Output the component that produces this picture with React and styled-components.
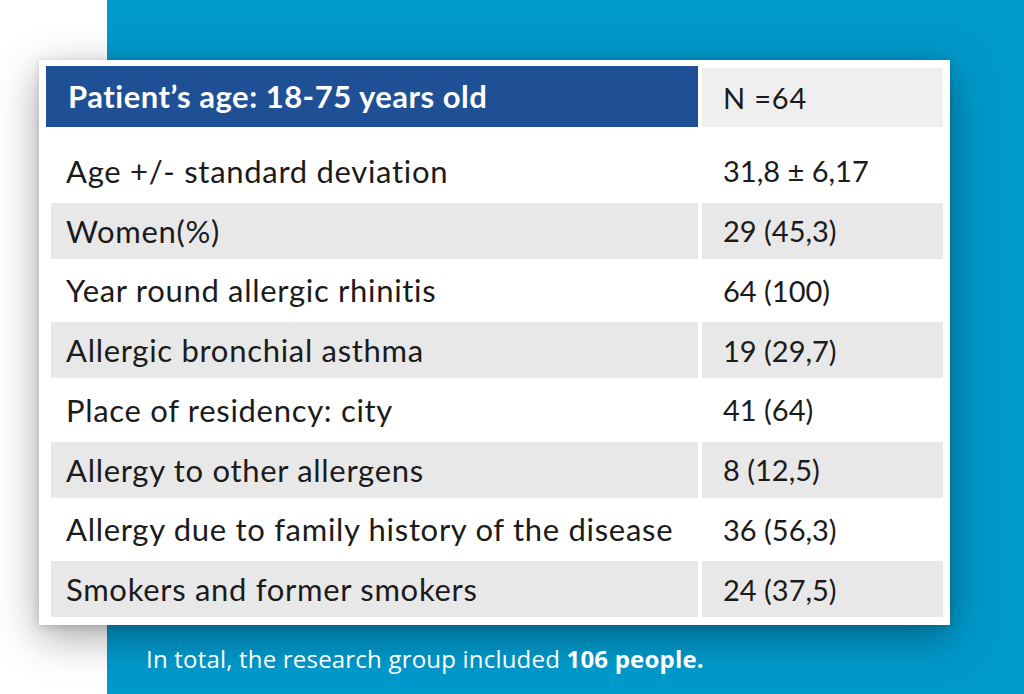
import React from "react";
import styled, { createGlobalStyle } from "styled-components";

const GlobalStyle = createGlobalStyle`
  html, body {
    margin: 0;
    padding: 0;
    background: #ffffff;
  }
  body {
    font-family: "Lato", "Open Sans", sans-serif;
  }
`;

const Page = styled.div`
  width: 1024px;
  height: 694px;
  overflow: hidden;
  background: #ffffff;
  display: flex;
`;

const BluePanel = styled.div`
  margin-left: 107px;
  flex: 1;
  height: 694px;
  background: #0099cc;
  padding-top: 60px;
  box-sizing: border-box;
  display: flex;
  flex-direction: column;
`;

const Card = styled.div`
  margin-left: -68px;
  width: 911px;
  height: 565px;
  box-sizing: border-box;
  background: #ffffff;
  padding: 6px 8px 8px 12px;
  box-shadow: 0 12px 40px rgba(0, 0, 0, 0.35), 0 2px 8px rgba(0, 0, 0, 0.15);
  display: flex;
  flex-direction: column;
  gap: 4px;
`;

const Row = styled.div`
  display: grid;
  column-gap: 4px;
  height: ${(p) => (p.$head ? "61px" : "55.75px")};
  margin-left: ${(p) => (p.$head ? "-5px" : "0")};
  grid-template-columns: ${(p) => (p.$head ? "652px 241px" : "647px 241px")};
  margin-bottom: ${(p) => (p.$head ? "12px" : "0")};
`;

const Cell = styled.div`
  display: flex;
  align-items: center;
  font-size: ${(p) => (p.$value ? "29px" : "31px")};
  color: #1b1b1b;
  letter-spacing: ${(p) => (p.$value ? "0" : "0.7px")};
  background: ${(p) => (p.$shade ? "#e8e8e8" : "transparent")};
  padding-left: ${(p) => (p.$value ? "21px" : "15px")};
  white-space: nowrap;
`;

const HeadCell = styled.div`
  display: flex;
  align-items: center;
  font-size: 31px;
  font-weight: 700;
  letter-spacing: 0.5px;
  color: #ffffff;
  background: #1f4f95;
  padding-left: 22px;
  padding-bottom: 2px;
  white-space: nowrap;
`;

const CountCell = styled.div`
  display: flex;
  align-items: center;
  margin-top: 2px;
  font-size: 29px;
  letter-spacing: 0.8px;
  color: #1b1b1b;
  background: #efefef;
  padding-left: 21px;
`;

const Footer = styled.p`
  margin: 17px 0 0 39px;
  font-family: "Open Sans", sans-serif;
  font-size: 24px;
  letter-spacing: 0.2px;
  color: #ffffff;
  b {
    font-weight: 700;
  }
`;

const rows = [
  ["Age +/- standard deviation", "31,8 ± 6,17"],
  ["Women(%)", "29 (45,3)"],
  ["Year round allergic rhinitis", "64 (100)"],
  ["Allergic bronchial asthma", "19 (29,7)"],
  ["Place of residency: city", "41 (64)"],
  ["Allergy to other allergens", "8 (12,5)"],
  ["Allergy due to family history of the disease", "36 (56,3)"],
  ["Smokers and former smokers", "24 (37,5)"],
];

export default function App() {
  return (
    <>
      <GlobalStyle />
      <Page>
        <BluePanel>
          <Card>
            <Row $head>
              <HeadCell>Patient’s age: 18-75 years old</HeadCell>
              <CountCell>N =64</CountCell>
            </Row>
            {rows.map(([label, value], i) => (
              <Row key={label}>
                <Cell $shade={i % 2 === 1}>{label}</Cell>
                <Cell $shade={i % 2 === 1} $value>
                  {value}
                </Cell>
              </Row>
            ))}
          </Card>
          <Footer>
            In total, the research group included <b>106 people.</b>
          </Footer>
        </BluePanel>
      </Page>
    </>
  );
}
